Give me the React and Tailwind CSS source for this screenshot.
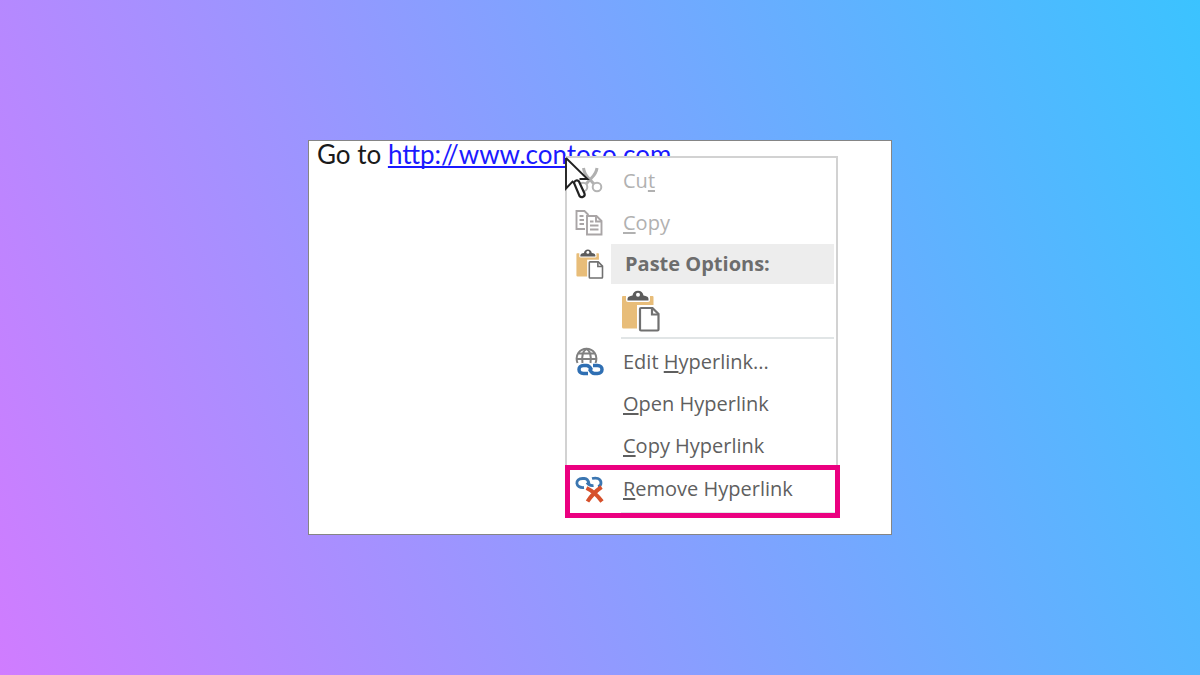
import React from "react";

function ScissorsIcon() {
  return (
    <svg width="28" height="32" viewBox="0 0 28 32" fill="none" aria-hidden="true">
      <path d="M8.500 3 C9 7 10.500 10 13.500 13 L19 19 M22 3 C21.500 7 19.500 10 16.500 13 L11 19" stroke="#b0b0b0" strokeWidth="3" />
      <circle cx="8" cy="22" r="4.300" stroke="#b4b4b4" strokeWidth="2" />
      <circle cx="22" cy="22" r="4.300" stroke="#b4b4b4" strokeWidth="2" />
    </svg>
  );
}

function CopyIcon() {
  return (
    <svg width="28" height="28" viewBox="0 0 28 28" fill="none" stroke="#a9a5a6" strokeWidth="1.900" aria-hidden="true">
      <path d="M10 20 H1.500 V2 H9.500 L13.500 6" />
      <path d="M4.500 7 H8.500 M4.500 11 H9 M4.500 15 H9" />
      <path d="M12 7 H21.500 L26.500 12 V25.500 H12 Z" fill="#fff" />
      <path d="M21 7 V12.500 H26.500 M15 12.500 H18.500 M15 16.500 H23.500 M15 20.500 H23.500" />
    </svg>
  );
}

function PasteIcon({ size }) {
  return (
    <svg width={size} height={size} viewBox="0 0 40 42" fill="none" aria-hidden="true">
      <path d="M2 6 Q1 6 1 7 V37 Q1 38.500 2.500 38.500 H18 V20 H32.500 V7 Q32.500 6 31.500 6 Z" fill="#e8bd79" />
      <path d="M5 4 H29 V10 Q29 12 27 12 H7 Q5 12 5 10 Z" fill="#fff" />
      <path d="M6.500 10.500 V9 Q6.500 6.500 9.500 6 L11.500 5.500 C12 2.500 14 0.800 17 0.800 S22 2.500 22.500 5.500 L24.500 6 Q27.500 6.500 27.500 9 V10.500 Z" fill="#5c5c5c" />
      <circle cx="17" cy="4.800" r="2" fill="#fff" />
      <path d="M16 15 H39 V42 H16 Z" fill="#fff" />
      <path d="M20 18 H31.500 L37.500 24 V39.500 Q37.500 40.500 36.500 40.500 H20 Q19 40.500 19 39.500 V19 Q19 18 20 18 Z" fill="#fff" stroke="#707070" strokeWidth="2.200" />
      <path d="M31 18 V24.500 H37.500" stroke="#707070" strokeWidth="2.200" />
    </svg>
  );
}

function EditLinkIcon() {
  return (
    <svg width="30" height="30" viewBox="0 0 30 30" fill="none" aria-hidden="true">
      <g stroke="#808080" strokeWidth="2">
        <path d="M2.500 16 C-0.500 8 5 1.800 11.500 1.800 S23.500 8 20.500 16" />
        <path d="M7.500 16 C6.500 9 8 4 11.500 2 C15 4 16.500 9 15.500 16 M4 6.500 H19 M1.500 12 H21.500" />
      </g>
      <g stroke="#2f6fb3" strokeWidth="3.500">
        <path d="M13 26.500 H8.500 C2.500 26.500 2.500 18.500 8.500 18.500 H11.500 C14.500 18.500 15.500 21 16.500 23" />
        <path d="M18 18.500 H22.500 C28.500 18.500 28.500 26.500 22.500 26.500 H19.500 C16.500 26.500 15.500 24 14.500 22" />
      </g>
    </svg>
  );
}

function RemoveLinkIcon() {
  return (
    <svg width="30" height="28" viewBox="0 0 30 28" fill="none" aria-hidden="true">
      <g stroke="#3b76b1" strokeWidth="2.800">
        <path d="M9 12.500 C0 13.500 -0.500 3.500 7.500 3.500 H9.500 C12.500 3.500 13.500 6 14 9" />
        <path d="M17 3.500 C21 2.500 26 3 26 8 C26 10 25 11 23 11.500" />
        <path d="M12 7.500 C13.500 10 15.500 11 18.500 10.500" />
      </g>
      <path d="M11.500 13 Q20 17 27 26.500 M26.500 12 Q18 18 12.500 26.500" stroke="#d6512c" strokeWidth="4" />
    </svg>
  );
}

function Cursor() {
  return (
    <svg className="absolute -top-px -left-0.5" width="26" height="44" viewBox="0 0 26 44" aria-hidden="true">
      <path d="M1 1 V31.500 L7 25 H9 L14.500 39 C16.500 41.500 20.500 39.500 19.500 36.500 L14 23.500 L15 22 H22.500 Z" fill="#fff" />
      <path d="M1 1 V31.500 L7.500 24.500 L9 26 M1 1 L22.500 22 H14.500" fill="none" stroke="#222" strokeWidth="1.900" />
      <path d="M9 26 C9.500 23.500 12.500 22.500 14 24.500 L19.500 36.500 C20.500 39.500 16.500 41.500 14.500 39 Z" fill="#fff" stroke="#222" strokeWidth="2.200" />
    </svg>
  );
}

function Item({ icon, children, disabled }) {
  return (
    <button
      type="button"
      role="menuitem"
      disabled={disabled}
      className="flex h-[42px] w-full items-center text-left text-[#5f5f5f] disabled:text-[#b1b1b1]"
    >
      <span className="flex w-14 shrink-0 pl-2">{icon}</span>
      <span>{children}</span>
    </button>
  );
}

function Key({ children }) {
  return <span className="underline decoration-2 underline-offset-2 [text-decoration-skip-ink:none]">{children}</span>;
}

export default function App() {
  return (
    <main className="flex min-h-screen items-center justify-center bg-[linear-gradient(69deg,#d07cff,#3bc3ff)]">
      <section className="relative min-h-[395px] w-full max-w-[584px] border border-[#858585] bg-white">
        <p className="pl-2 font-['Lato','Carlito',sans-serif] text-[26px] leading-[26px] text-[#1a1a1a]">
          Go to{" "}
          <a href="http://www.contoso.com" className="text-[#1a1aff] underline decoration-2 underline-offset-2 [text-decoration-skip-ink:none]">
            http://www.contoso.com
          </a>
        </p>

        <div
          role="menu"
          aria-label="Hyperlink"
          className="absolute top-[15px] left-[256px] w-[273px] border-x-2 border-t-2 border-[#d2d2d2] bg-white pt-0.5 font-['Open_Sans','Noto_Sans',sans-serif] text-[20px] leading-7 font-medium"
        >
          <Item disabled icon={<ScissorsIcon />}>Cu<Key>t</Key></Item>
          <Item disabled icon={<CopyIcon />}><Key>C</Key>opy</Item>
          <div className="flex h-10 items-center">
            <span className="w-11 shrink-0 pl-2"><PasteIcon size={30} /></span>
            <h2 className="mr-0.5 flex h-10 flex-1 items-center bg-[#ededed] pl-3.5 font-bold text-[#6d6d6d]">Paste Options:</h2>
          </div>
          <div className="flex h-[53px] items-center pl-[53px]">
            <button type="button" role="menuitem" aria-label="Paste"><PasteIcon size={42} /></button>
          </div>
          <hr className="mr-0.5 mb-0.5 ml-[54px] border-t-2 border-[#e1e5e6]" />
          <Item icon={<EditLinkIcon />}>Edit <Key>H</Key>yperlink...</Item>
          <Item><Key>O</Key>pen Hyperlink</Item>
          <Item><Key>C</Key>opy Hyperlink</Item>
          <div className="-mx-0.5 -mt-0.5 w-[275px] border-5 border-[#eb0080] bg-white">
            <div className="-ml-[3px] flex h-[38px] items-center">
              <Item icon={<RemoveLinkIcon />}><Key>R</Key>emove Hyperlink</Item>
            </div>
            <hr className="mt-1 ml-[51px] border-[#e1e5e6]" />
          </div>
          <Cursor />
        </div>
      </section>
    </main>
  );
}
